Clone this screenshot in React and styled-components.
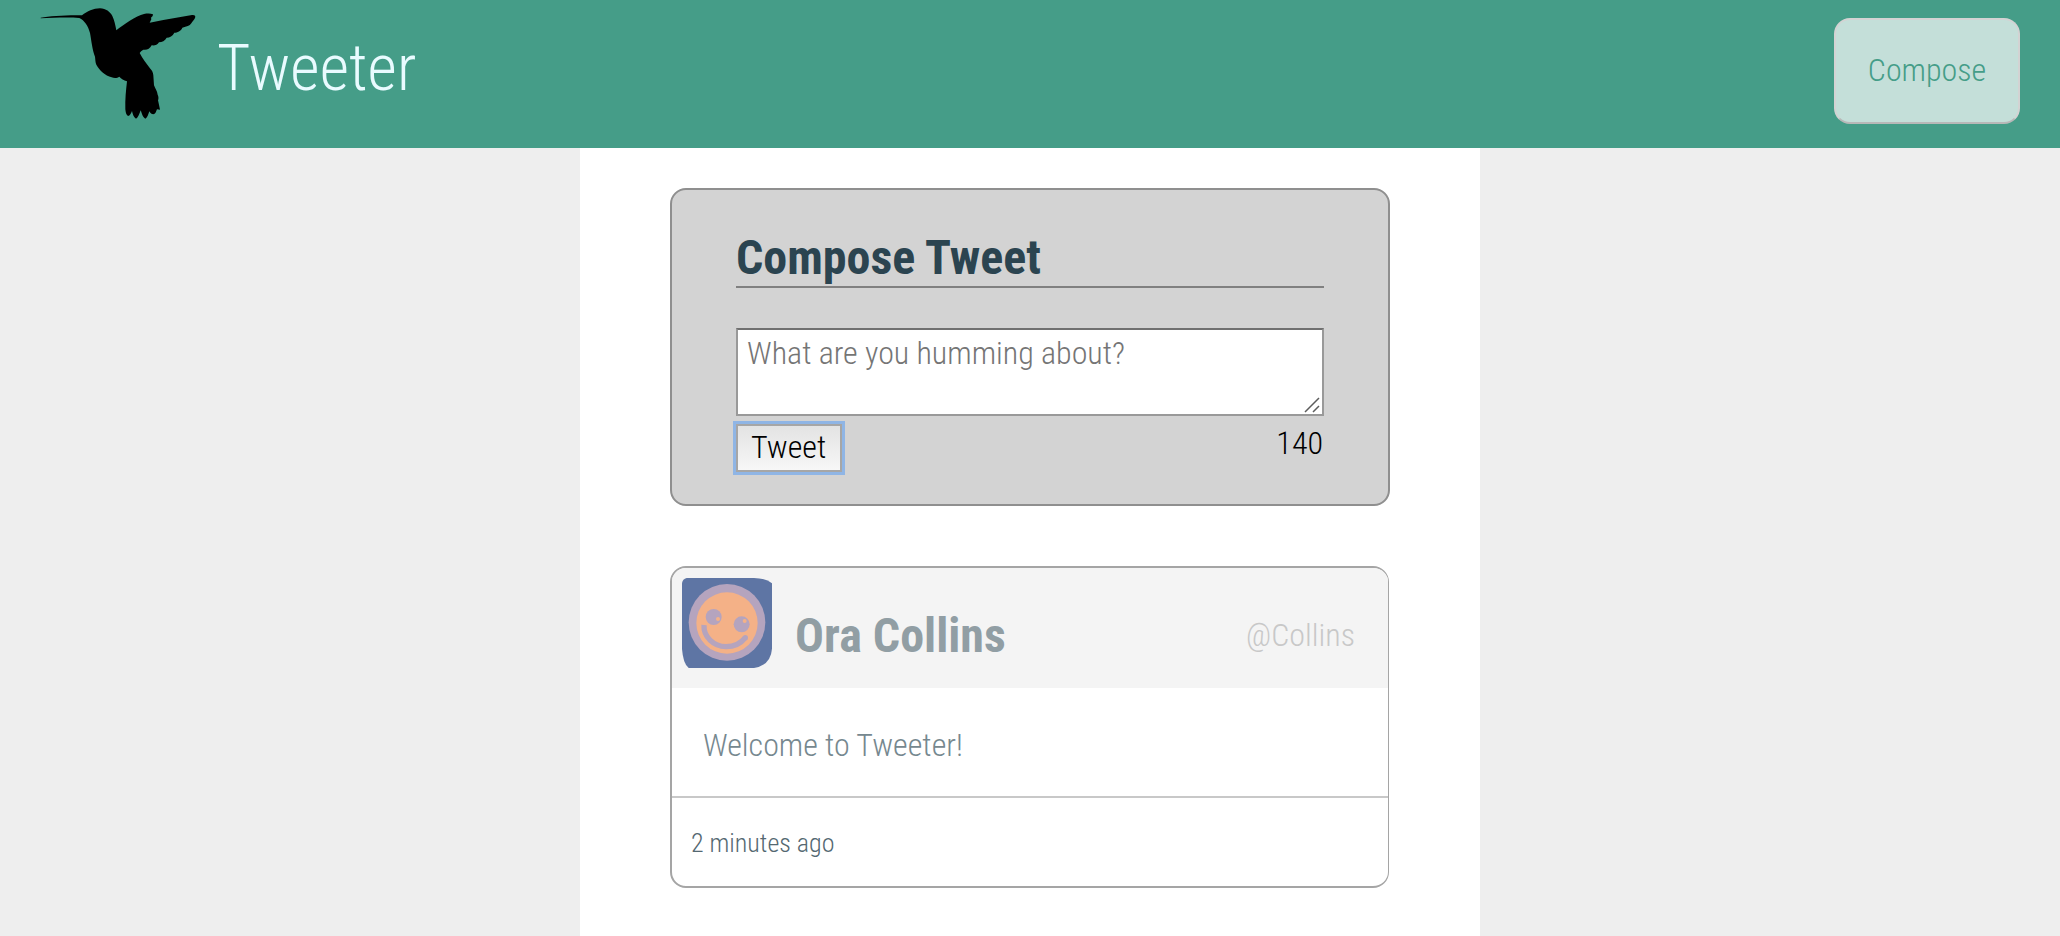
import React, { useState } from "react";
import styled, { createGlobalStyle } from "styled-components";

const GlobalStyle = createGlobalStyle`
  * { box-sizing: border-box; }
  body {
    margin: 0;
    background: #eee;
    color: #000;
    font-family: "Roboto Condensed", "Liberation Sans Narrow", Roboto, sans-serif;
    font-size: 32px;
    font-weight: 300;
    line-height: 38px;
  }
`;

const Page = styled.div`
  min-height: 100vh;
  display: flex;
  flex-direction: column;
`;

const TopBar = styled.header`
  display: flex;
  align-items: flex-start;
  justify-content: space-between;
  padding: 0 40px;
  background: #459d88;
`;

const Brand = styled.div`
  display: flex;
  align-items: flex-start;
  gap: 21px;
  padding-top: 8px;
`;

const BirdSvg = styled.svg`
  width: 156px;
  height: 112px;
`;

const BrandName = styled.h1`
  margin: 0;
  color: #e9fbff;
  font-size: 64px;
  font-weight: 300;
  line-height: 122px;
`;

const ComposeButton = styled.button`
  width: 186px;
  height: 106px;
  margin: 18px 0 24px;
  padding: 0 6px 2px;
  border: 2px solid #d3d3d3;
  border-bottom-color: #b8b8b8;
  border-radius: 16px;
  background: #c4dfd9;
  color: #459d88;
  font: inherit;
`;

const Main = styled.main`
  flex: 1;
  width: 100%;
  max-width: 900px;
  margin: 0 auto;
  padding: 40px 90px;
  background: #fff;
`;

const ComposeCard = styled.section`
  margin-bottom: 60px;
  padding: 40px 64px 32px;
  border: 2px solid #8f8f8f;
  border-radius: 16px;
  background: #d3d3d3;
`;

const ComposeTitle = styled.h2`
  margin: 0 0 40px;
  border-bottom: 2px solid #808080;
  color: #2b4450;
  font-size: 48px;
  font-weight: 700;
  line-height: 56px;
`;

const TextField = styled.div`
  position: relative;
  margin-bottom: 8px;
`;

const TweetInput = styled.textarea`
  display: block;
  width: 100%;
  height: 88px;
  padding: 4px 9px;
  border: 2px solid #999;
  border-top-color: #707070;
  border-radius: 0;
  background: #fff;
  color: #000;
  font: inherit;
  resize: none;
  outline: none;

  &::placeholder {
    color: #757575;
    opacity: 1;
  }
`;

const Grip = styled.svg`
  position: absolute;
  right: 4px;
  bottom: 3px;
  width: 16px;
  height: 16px;
  pointer-events: none;
`;

const FormRow = styled.div`
  display: flex;
  align-items: flex-start;
  justify-content: space-between;
`;

const SubmitButton = styled.button`
  height: 48px;
  padding: 0 14px 2px 13px;
  border: 2px solid #a6a6a6;
  border-radius: 0;
  background: linear-gradient(#e3e3e3, #f7f7f7);
  box-shadow: 0 0 0 3px #8fb5e5;
  color: #000;
  font: inherit;
`;

const Counter = styled.output`
  display: block;
  padding-right: 1px;
`;

const TweetCard = styled.article`
  border: 2px solid #a5a5a5;
  border-right-width: 1px;
  border-radius: 16px;
  margin-right: 1px;
  overflow: hidden;
`;

const TweetHeader = styled.header`
  display: flex;
  align-items: flex-start;
  gap: 23px;
  min-height: 120px;
  padding: 10px 33px 10px 10px;
  background: #f4f4f4;
`;

const AvatarSvg = styled.svg`
  width: 90px;
  height: 90px;
  flex: none;
`;

const Identity = styled.div`
  display: flex;
  flex: 1;
  justify-content: space-between;
  padding-top: 30px;
  line-height: 56px;
`;

const AuthorName = styled.h2`
  margin: 0;
  color: #919ea4;
  font-size: 48px;
  font-weight: 700;
`;

const Handle = styled.span`
  color: #c8c8c8;
  line-height: 54px;
`;

const Message = styled.p`
  margin: 0;
  padding: 38px 31px 32px;
  border-bottom: 2px solid #c8c8c8;
  color: #76888f;
`;

const TweetFooter = styled.footer`
  padding: 29px 19px 27px;
  color: #546871;
  font-size: 26px;
  line-height: 32px;
`;

const Bird = () => (
  <BirdSvg viewBox="30 24 468 336" aria-hidden="true">
    <path d="M32 53 C60 48 110 45 156 46 C172 34 190 25 210 25 C228 26 240 35 247 48 C253 60 256 75 259 91 C280 74 318 48 342 42 C352 40 362 40 369 43 L368 48 L363 53 L364 58 L359 68 L400 60 L486 45 C494 44 498 48 495 54 C492 60 487 64 484 70 C479 78 470 80 457 83 C453 93 442 98 433 98 C428 108 419 113 410 113 C405 122 396 127 387 127 C382 135 374 137 365 136 C359 147 350 151 340 149 C335 152 331 155 329 159 C338 177 350 192 361 206 C367 212 369 218 370 226 L372 256 C376 266 382 274 383 284 C386 290 386 297 384 301 C386 310 388 319 390 329 L381 328 C378 336 376 342 370 343 C365 342 361 340 358 334 C355 343 352 353 346 356 C339 353 336 342 332 331 C328 343 324 353 318 356 C311 352 308 342 306 333 C303 340 300 347 294 348 C288 345 287 336 286 328 C285 298 288 270 291 244 C281 241 274 237 268 230 C262 235 252 235 245 232 C225 226 208 211 199 194 C196 187 196 178 195 170 C187 151 184 120 180 99 C175 78 163 61 148 54 C110 51 65 54 32 55 Z" />
  </BirdSvg>
);

const Avatar = () => (
  <AvatarSvg viewBox="0 0 270 270" role="img" aria-label="Ora Collins">
    <path
      d="M14 0 H216 Q252 1 270 16 V212 Q266 262 216 270 H20 Q3 256 0 212 V16 Q2 3 14 0 Z"
      fill="#5e75a4"
    />
    <circle cx="135" cy="133" r="115" fill="#b5a4be" />
    <circle cx="135" cy="135" r="92" fill="#f4b187" />
    <circle cx="95" cy="117" r="24" fill="#b5a4be" />
    <circle cx="179" cy="139" r="24" fill="#b5a4be" />
    <circle cx="108" cy="123" r="6" fill="#f4b187" />
    <circle cx="188" cy="129" r="6" fill="#f4b187" />
    <path
      d="M66 141 C64 176 94 205 132 206 C158 206 177 196 190 179"
      fill="none"
      stroke="#b5a4be"
      strokeWidth="16"
    />
    <circle cx="190" cy="179" r="8" fill="#b5a4be" />
  </AvatarSvg>
);

const LIMIT = 140;

export default function App() {
  const [text, setText] = useState("");

  return (
    <Page>
      <GlobalStyle />
      <TopBar>
        <Brand>
          <Bird />
          <BrandName>Tweeter</BrandName>
        </Brand>
        <ComposeButton type="button">Compose</ComposeButton>
      </TopBar>
      <Main>
        <ComposeCard>
          <ComposeTitle id="compose-title">Compose Tweet</ComposeTitle>
          <form onSubmit={(event) => event.preventDefault()}>
            <TextField>
              <TweetInput
                id="tweet-text"
                aria-labelledby="compose-title"
                placeholder="What are you humming about?"
                value={text}
                onChange={(event) => setText(event.target.value)}
              />
              <Grip viewBox="0 0 16 16" aria-hidden="true">
                <path d="M1 15 L15 1 M9 15 L15 9" stroke="#5c5c5c" strokeWidth="1.5" />
              </Grip>
            </TextField>
            <FormRow>
              <SubmitButton type="submit">Tweet</SubmitButton>
              <Counter htmlFor="tweet-text">{LIMIT - text.length}</Counter>
            </FormRow>
          </form>
        </ComposeCard>
        <TweetCard>
          <TweetHeader>
            <Avatar />
            <Identity>
              <AuthorName>Ora Collins</AuthorName>
              <Handle>@Collins</Handle>
            </Identity>
          </TweetHeader>
          <Message>Welcome to Tweeter!</Message>
          <TweetFooter>2 minutes ago</TweetFooter>
        </TweetCard>
      </Main>
    </Page>
  );
}
